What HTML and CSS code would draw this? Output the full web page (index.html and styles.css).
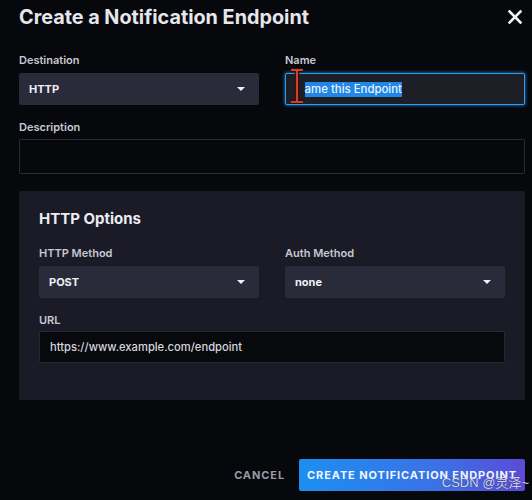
FILE: index.html
```html
<!DOCTYPE html>
<html>
<head>
<meta charset="utf-8">
<link rel="stylesheet" href="styles.css">
</head>
<body>
<div class="modal">
  <div class="header">
    <h1 class="title">Create a Notification Endpoint</h1>
    <svg class="close" width="14" height="14" viewBox="0 0 14 14"><path d="M1.5 1.5 L12.5 12.5 M12.5 1.5 L1.5 12.5" stroke="#f2f2f5" stroke-width="2.6" stroke-linecap="square"/></svg>
  </div>
  <div class="row">
    <div class="field">
      <div class="label">Destination</div>
      <div class="select"><span>HTTP</span><span class="caret"></span></div>
    </div>
    <div class="field">
      <div class="label">Name</div>
      <div class="input focus"><span class="hidden-n">N</span><span class="sel">ame this Endpoint</span>
        <svg class="ibeam" width="16" height="36" viewBox="0 0 16 36"><path d="M2 2 H14 M8 2 V34 M2 34 H14" stroke="#2a0c08" stroke-width="4.5" fill="none"/><path d="M2 2 H14 M8 2 V34 M2 34 H14" stroke="#d0402c" stroke-width="2.2" fill="none"/></svg>
      </div>
    </div>
  </div>
  <div class="label desc-label">Description</div>
  <div class="input dark tall"></div>
  <div class="panel">
    <h2 class="panel-title">HTTP Options</h2>
    <div class="row">
      <div class="field">
        <div class="label">HTTP Method</div>
        <div class="select"><span>POST</span><span class="caret"></span></div>
      </div>
      <div class="field">
        <div class="label">Auth Method</div>
        <div class="select"><span>none</span><span class="caret"></span></div>
      </div>
    </div>
    <div class="label url-label">URL</div>
    <div class="input dark url"><span>https://www.example.com/endpoint</span></div>
  </div>
  <div class="footer">
    <button class="btn cancel">CANCEL</button>
    <button class="btn primary">CREATE NOTIFICATION ENDPOINT</button>
  </div>
  <div class="watermark">CSDN @灵泽~</div>
</div>
</body>
</html>
```

FILE: styles.css
```css
html, body {
  margin: 0;
  padding: 0;
  background: #07080c;
  width: 532px;
  height: 500px;
  overflow: hidden;
}
.modal {
  position: relative;
  box-sizing: border-box;
  width: 532px;
  height: 500px;
  padding: 0 7px 0 19px;
  font-family: Inter, "Noto Sans", sans-serif;
  color: #dcdce4;
}
.header {
  display: flex;
  justify-content: space-between;
  align-items: center;
  height: 34px;
  padding-right: 2px;
}
.title {
  margin: 0;
  font-size: 19.8px;
  font-weight: 700;
  color: #e6e6ec;
}
.close {
  margin-right: 1px;
}
.row {
  display: flex;
  gap: 26px;
}
.field {
  flex: 1;
  display: flex;
  flex-direction: column;
}
.label {
  font-size: 11px;
  font-weight: 600;
  color: #c8c8d2;
  line-height: 14px;
  height: 14px;
}
.row .label {
  margin-top: 19px;
  margin-bottom: 6px;
}
.select {
  height: 32px;
  background: #2a2b3a;
  border-radius: 2px;
  display: flex;
  align-items: center;
  justify-content: space-between;
  padding: 0 14px 0 10px;
  font-size: 11px;
  font-weight: 700;
  color: #f0f0f4;
}
.caret {
  width: 0;
  height: 0;
  border-left: 4px solid transparent;
  border-right: 4px solid transparent;
  border-top: 4px solid #f0f0f4;
}
.input {
  box-sizing: border-box;
  height: 32px;
  border-radius: 2px;
  display: flex;
  align-items: center;
  padding: 0 10px;
  font-size: 11px;
  color: #e0e0e6;
  position: relative;
}
.focus {
  background: #1d1e26;
  border: 1px solid #2d9df2;
  box-shadow: 0 0 3px 1px rgba(40, 150, 240, 0.55);
}
.hidden-n {
  color: transparent;
  font-size: 11.4px;
}
.sel {
  background: #2186e6;
  color: #e6f3ff;
  font-weight: 500;
  font-size: 11.4px;
  line-height: 15px;
}
.ibeam {
  position: absolute;
  left: 3px;
  top: -6px;
}
.desc-label {
  margin-top: 15px;
  margin-bottom: 5px;
}
.dark {
  background: #07080c;
  border: 1px solid #2a2b34;
}
.tall {
  height: 35px;
}
.panel {
  margin-top: 17px;
  height: 209px;
  box-sizing: border-box;
  background: #1a1b27;
  border-radius: 2px;
  padding: 18px 20px 0 20px;
}
.panel-title {
  margin: 0;
  font-size: 15px;
  font-weight: 700;
  color: #ececf2;
  line-height: 20px;
}
.panel .row .label {
  margin-top: 17px;
}
.url-label {
  margin-top: 15px;
  margin-bottom: 4px;
}
.url {
  height: 32px;
  background: #08090d;
  border: 1px solid #262733;
  color: #d6d6de;
  font-weight: 500;
  font-size: 11.2px;
}
.footer {
  display: flex;
  justify-content: flex-end;
  align-items: center;
  gap: 14px;
  margin-top: 59px;
}
.btn {
  font-family: Inter, "Noto Sans", sans-serif;
  border: none;
  font-size: 11px;
  font-weight: 700;
  letter-spacing: 0.9px;
  cursor: pointer;
}
.cancel {
  background: transparent;
  color: #9a9aa6;
  padding: 0;
}
.primary {
  width: 226px;
  height: 32px;
  border-radius: 2px;
  color: #f0f6ff;
  background: linear-gradient(90deg, #1c8ff0 0%, #3a72e6 60%, #5b4bd6 100%);
  padding: 0;
}
.watermark {
  position: absolute;
  right: 3px;
  bottom: 9px;
  font-family: "Liberation Sans", "Noto Sans CJK SC", sans-serif;
  font-size: 13px;
  color: rgba(235, 235, 240, 0.9);
  text-shadow: 0 0 1px rgba(0,0,0,0.6);
}
```
